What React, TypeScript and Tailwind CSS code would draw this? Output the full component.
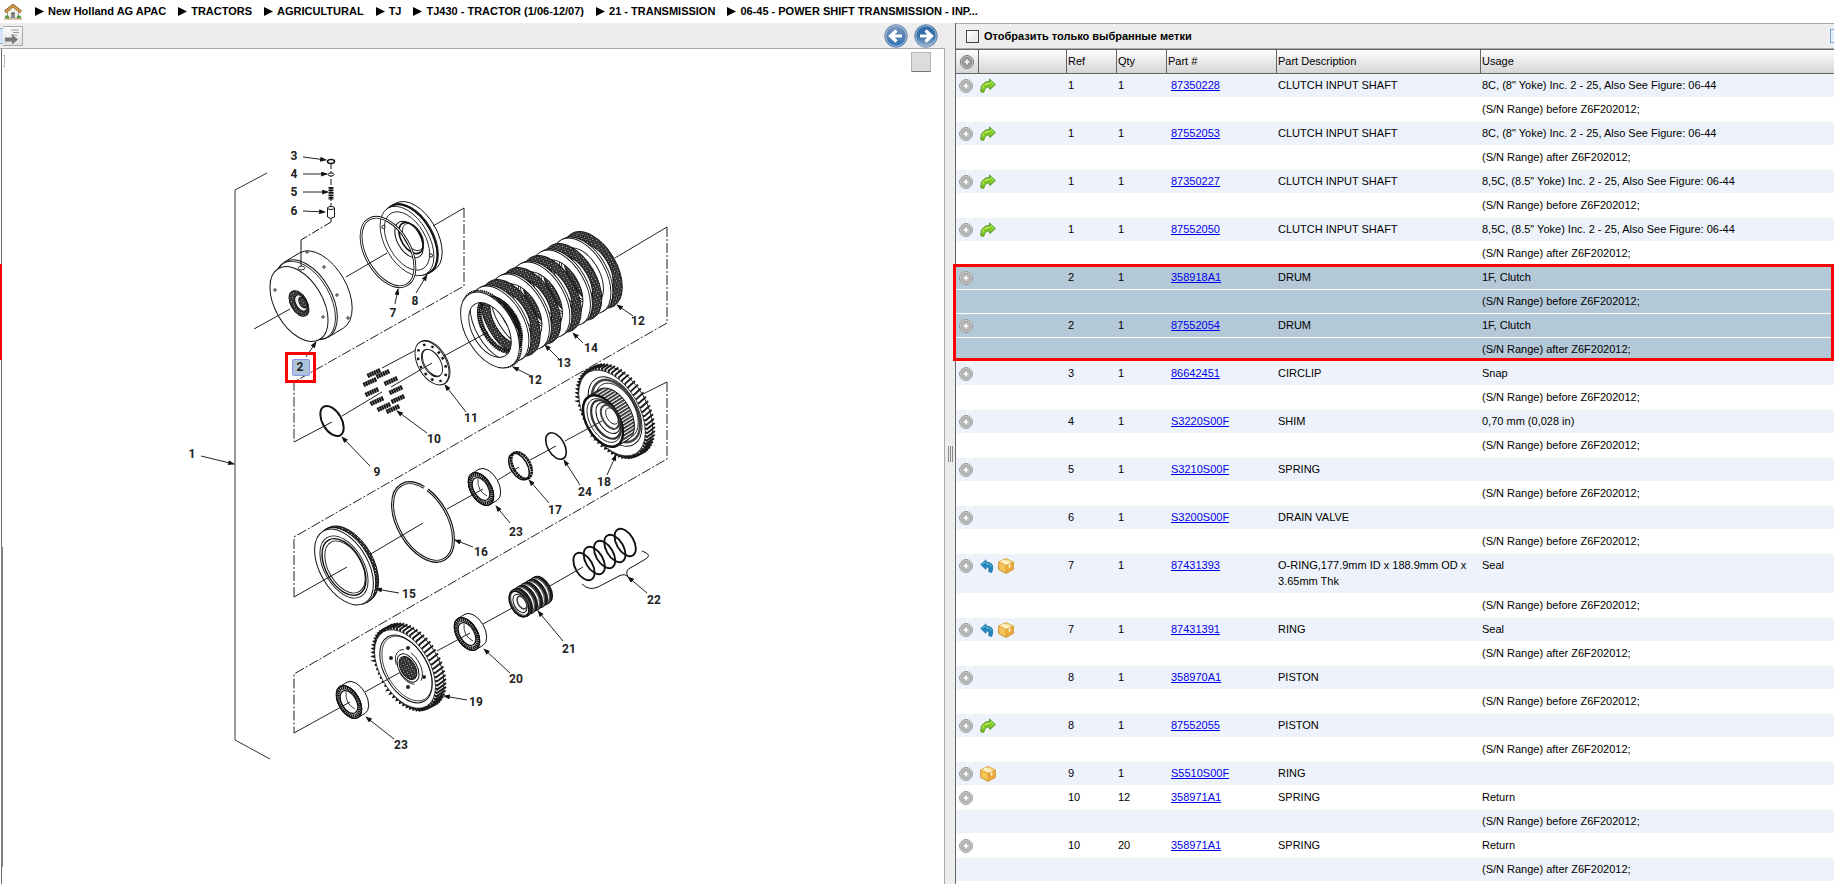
import React from 'react';

type IconName = 'green' | 'blue' | 'box';

interface Part {
  ref: string;
  qty: string;
  number: string;
  description: string;
  usage?: string;
  range?: string;
  icons?: IconName[];
  selected?: boolean;
}

const BEFORE = '(S/N Range) before Z6F202012;';
const AFTER = '(S/N Range) after Z6F202012;';

const parts: Part[] = [
  { ref: '1', qty: '1', number: '87350228', description: 'CLUTCH INPUT SHAFT', usage: '8C, (8" Yoke) Inc. 2 - 25, Also See Figure: 06-44', range: BEFORE, icons: ['green'] },
  { ref: '1', qty: '1', number: '87552053', description: 'CLUTCH INPUT SHAFT', usage: '8C, (8" Yoke) Inc. 2 - 25, Also See Figure: 06-44', range: AFTER, icons: ['green'] },
  { ref: '1', qty: '1', number: '87350227', description: 'CLUTCH INPUT SHAFT', usage: '8,5C, (8.5" Yoke) Inc. 2 - 25, Also See Figure: 06-44', range: BEFORE, icons: ['green'] },
  { ref: '1', qty: '1', number: '87552050', description: 'CLUTCH INPUT SHAFT', usage: '8,5C, (8.5" Yoke) Inc. 2 - 25, Also See Figure: 06-44', range: AFTER, icons: ['green'] },
  { ref: '2', qty: '1', number: '358918A1', description: 'DRUM', usage: '1F, Clutch', range: BEFORE, selected: true },
  { ref: '2', qty: '1', number: '87552054', description: 'DRUM', usage: '1F, Clutch', range: AFTER, selected: true },
  { ref: '3', qty: '1', number: '86642451', description: 'CIRCLIP', usage: 'Snap', range: BEFORE },
  { ref: '4', qty: '1', number: 'S3220S00F', description: 'SHIM', usage: '0,70 mm (0,028 in)', range: BEFORE },
  { ref: '5', qty: '1', number: 'S3210S00F', description: 'SPRING', range: BEFORE },
  { ref: '6', qty: '1', number: 'S3200S00F', description: 'DRAIN VALVE', range: BEFORE },
  { ref: '7', qty: '1', number: '87431393', description: 'O-RING,177.9mm ID x 188.9mm OD x 3.65mm Thk', usage: 'Seal', range: BEFORE, icons: ['blue', 'box'] },
  { ref: '7', qty: '1', number: '87431391', description: 'RING', usage: 'Seal', range: AFTER, icons: ['blue', 'box'] },
  { ref: '8', qty: '1', number: '358970A1', description: 'PISTON', range: BEFORE },
  { ref: '8', qty: '1', number: '87552055', description: 'PISTON', range: AFTER, icons: ['green'] },
  { ref: '9', qty: '1', number: 'S5510S00F', description: 'RING', icons: ['box'] },
  { ref: '10', qty: '12', number: '358971A1', description: 'SPRING', usage: 'Return', range: BEFORE },
  { ref: '10', qty: '20', number: '358971A1', description: 'SPRING', usage: 'Return', range: AFTER },
];

const crumbs = [
  'New Holland AG APAC',
  'TRACTORS',
  'AGRICULTURAL',
  'TJ',
  'TJ430 - TRACTOR (1/06-12/07)',
  '21 - TRANSMISSION',
  '06-45 - POWER SHIFT TRANSMISSION - INP...',
];

/* ---------- icons ---------- */

function HomeIcon() {
  return (
    <svg width="18" height="16" viewBox="0 0 18 16" aria-hidden="true">
      <path d="M3.5 7.5 9 3l5.500 4.500V14h-11z" fill="#f4efe6" stroke="#8d8577" strokeWidth=".8" />
      <path d="M1 8 9 1.300 17 8" fill="none" stroke="#8a5a22" strokeWidth="3" strokeLinejoin="round" />
      <path d="M1.500 7.800 9 1.600l7.500 6.200" fill="none" stroke="#dba352" strokeWidth="1.600" />
      <rect x="7.200" y="9" width="3.600" height="5" fill="#7d7f86" />
      <path d="M7.200 9h3.600" stroke="#444" />
      <rect x="1" y="11.500" width="4" height="3" rx="1.200" fill="#4f9a3a" />
      <rect x="13" y="11.500" width="4" height="3" rx="1.200" fill="#4f9a3a" />
      <path d="M0 15h18" stroke="#b98752" />
      <path d="M7 14.500h4" stroke="#cfc9bd" />
    </svg>
  );
}

function PlusIcon({ dark = false }: { dark?: boolean }) {
  const rim = dark ? '#666' : '#8f8f8f';
  const fill = dark ? '#999' : '#b4b4b4';
  return (
    <svg width="14" height="14" viewBox="0 0 14 14" aria-hidden="true">
      <circle cx="7" cy="7" r="6.400" fill="#dcdcdc" stroke={rim} />
      <circle cx="7" cy="7" r="4.700" fill={fill} stroke={rim} strokeWidth=".6" />
      <path d="M7 4.500v5M4.500 7h5" stroke="#fff" strokeWidth="1.600" />
    </svg>
  );
}

function GreenArrow() {
  return (
    <svg width="16" height="16" viewBox="0 0 16 16" aria-hidden="true">
      <path d="M9.500 1 15.300 6.500 9.800 11.500V9C6.800 8.900 4.600 10 3.800 14.300L1 14C.3 8 3.200 3.600 9.500 3.500z" fill="#82cc22" stroke="#3f8a13" strokeWidth=".9" strokeLinejoin="round" />
      <path d="M10.400 3.100 13.800 6.400M2.300 10.500C3 7 5.500 5.300 9.800 5.200" fill="none" stroke="#c9f07c" />
    </svg>
  );
}

function BlueArrow() {
  return (
    <svg width="14" height="16" viewBox="0 0 14 16" aria-hidden="true">
      <path d="M.8 6.500 6 1.800v2.400c6-.2 8.300 3.500 5.600 10.200L8.600 13.600C9.600 10 8.500 9 6 9.100v2.300z" fill="#2187be" stroke="#1b6a9e" strokeWidth=".8" strokeLinejoin="round" />
      <path d="M2.400 6.200 5.300 3.800M6 5.600c3-.1 4.600 1 5 3" fill="none" stroke="#7cc6e8" />
    </svg>
  );
}

function BoxIcon() {
  return (
    <svg width="16" height="16" viewBox="0 0 16 16" aria-hidden="true">
      <path d="M8 .6 15.300 4v7.500L8 15.400.7 11.500V4z" fill="#f6c55a" stroke="#c98a1c" strokeWidth=".9" strokeLinejoin="round" />
      <path d="M8 .9 15 4.100 8 7.600 1 4.100z" fill="#fbe09a" />
      <path d="M8 7.600 15 4.100v7.300L8 15z" fill="#eaa93a" />
      <path d="M4 2.600 11.500 6v3.400" fill="none" stroke="#fff7dc" strokeWidth="1.700" />
      <path d="M.9 4.100 8 7.600l7-3.500M8 7.600v7.400" fill="none" stroke="#d39a2d" strokeWidth=".7" />
    </svg>
  );
}

function NavArrow({ flip = false }: { flip?: boolean }) {
  return (
    <svg width="24" height="24" viewBox="0 0 24 24" aria-hidden="true">
      <defs>
        <linearGradient id={flip ? 'nav-next' : 'nav-prev'} x1="0" y1="0" x2="0" y2="1">
          <stop offset="0" stopColor={flip ? '#2f6da8' : '#7f9cc0'} />
          <stop offset=".5" stopColor={flip ? '#356fa9' : '#5580b3'} />
          <stop offset="1" stopColor={flip ? '#9fb6d0' : '#2c75b8'} />
        </linearGradient>
      </defs>
      <circle cx="12" cy="12" r="11.300" fill={flip ? 'url(#nav-next)' : 'url(#nav-prev)'} stroke="#6d8cb0" />
      <circle cx="12" cy="12" r="10.200" fill="none" stroke="#b7cbe0" strokeWidth=".8" />
      <path
        d={flip ? 'M6 12h9M11.500 6.500l6 5.500-6 5.500' : 'M18 12H9M12.500 6.500l-6 5.500 6 5.500'}
        fill="none"
        stroke="#fff"
        strokeWidth="3.200"
      />
    </svg>
  );
}

function PageArrowIcon() {
  return (
    <svg width="17" height="18" viewBox="0 0 17 18" aria-hidden="true">
      <path d="M7 3h8M9 5.500h6M7 8h6" stroke="#9a9a9a" />
      <path d="M1 10.500h7V7.500l6 5-6 5v-3H1z" fill="#777" />
    </svg>
  );
}

function RowIcon({ name }: { name: IconName }) {
  if (name === 'green') return <GreenArrow />;
  if (name === 'blue') return <BlueArrow />;
  return <BoxIcon />;
}

/* ---------- exploded view ---------- */

// every disc is seen along the same axis, so all ellipses share one ratio and tilt
const RATIO = 0.58;

interface DiscProps {
  x: number;
  y: number;
  r: number;
  fill?: string;
  stroke?: string;
  w?: number;
  dash?: string;
  pathLength?: number;
}

function Disc({ x, y, r, fill = 'none', stroke = '#111', w = 1, dash, pathLength }: DiscProps) {
  return (
    <ellipse
      rx={r * RATIO}
      ry={r}
      transform={`translate(${x} ${y}) rotate(-30)`}
      fill={fill}
      stroke={stroke}
      strokeWidth={w}
      strokeDasharray={dash}
      pathLength={pathLength}
    />
  );
}

function Cylinder({ x, y, r, depth, side = '#fff' }: { x: number; y: number; r: number; depth: number; side?: string }) {
  const dx = depth;
  const dy = -depth * 0.6;
  const ox = r * 0.5;
  const oy = r * 0.866;
  return (
    <g stroke="#111" strokeWidth="1">
      <path
        d={`M${x - ox} ${y - oy}l${dx} ${dy}A${r * RATIO} ${r} -30 0 1 ${x + ox + dx} ${y + oy + dy}L${x + ox} ${y + oy}z`}
        fill={side}
      />
      <Disc x={x} y={y} r={r} fill="#fff" />
    </g>
  );
}

function Annulus({ x, y, r, inner, fill }: { x: number; y: number; r: number; inner: number; fill: string }) {
  const loop = (a: number) => `M0 ${-a}A${a * RATIO} ${a} 0 1 1 0 ${a}A${a * RATIO} ${a} 0 1 1 0 ${-a}z`;
  return (
    <path
      d={loop(r) + loop(inner)}
      transform={`translate(${x} ${y}) rotate(-30)`}
      fillRule="evenodd"
      fill={fill}
      stroke="#111"
      strokeWidth=".9"
    />
  );
}

// helical gear rim: one slanted stroke per tooth from the front face to the back face
function GearRim({ x, y, r, depth, teeth }: { x: number; y: number; r: number; depth: number; teeth: number }) {
  const point = (angle: number, cx: number, cy: number, a: number) => {
    const u = Math.cos(angle) * a * RATIO;
    const v = Math.sin(angle) * a;
    return `${(cx + u * 0.866 + v * 0.5).toFixed(1)} ${(cy - u * 0.5 + v * 0.866).toFixed(1)}`;
  };
  const strokes = Array.from({ length: teeth }, (_, i) => {
    const angle = (i / teeth) * Math.PI * 2;
    return `M${point(angle, x, y, r - 3)}L${point(angle, x, y, r)}L${point(angle - 0.05, x + depth, y - depth * 0.5, r)}`;
  });
  return (
    <g>
      <Disc x={x + depth - 1} y={y - depth * 0.5} r={r - 2} fill="#fff" w={0.8} />
      <path d={strokes.join('')} fill="none" stroke="#1a1a1a" strokeWidth="1.900" />
      <Disc x={x} y={y} r={r - 2.500} fill="#fff" w={0.7} />
    </g>
  );
}

function Bearing({ x, y }: { x: number; y: number }) {
  return (
    <g>
      <Cylinder x={x} y={y} r={18} depth={7} />
      <Disc x={x} y={y} r={15.500} w={3.600} dash="1.500 .5" />
      <Disc x={x} y={y} r={17.800} w={1.200} />
      <Disc x={x} y={y} r={12.500} w={1.200} fill="#fff" />
      <path d={`M${x - 3} ${y - 10}q-1 12 9 17`} fill="none" stroke="#111" strokeWidth=".8" />
    </g>
  );
}

const callouts: [string, number, number][] = [
  ['1', 192, 454], ['2', 300, 367], ['3', 294, 156], ['4', 294, 174], ['5', 294, 192], ['6', 294, 211],
  ['7', 393, 313], ['8', 415, 301], ['9', 377, 472], ['10', 434, 439], ['11', 471, 418], ['12', 638, 321],
  ['12', 535, 380], ['13', 564, 363], ['14', 591, 348], ['15', 409, 594], ['16', 481, 552], ['17', 555, 510],
  ['18', 604, 482], ['19', 476, 702], ['20', 516, 679], ['21', 569, 649], ['22', 654, 600], ['23', 516, 532],
  ['23', 401, 745], ['24', 585, 492],
];

const leaders = [
  'M303 157 326 160', 'M303 174 327 174', 'M303 192 328 192', 'M303 211 325 212', 'M416 293 427 275',
  'M395 304 398 289', 'M306 357 316 342', 'M466 412 445 385', 'M427 433 397 411', 'M370 466 342 437',
  'M201 456 234 464', 'M633 316 617 305', 'M583 343 573 333', 'M559 359 545 345', 'M531 376 513 367',
  'M607 475 616 455', 'M580 485 564 460', 'M549 503 529 480', 'M510 523 496 506', 'M473 547 455 540',
  'M399 593 376 589', 'M510 673 484 649', 'M467 700 444 696', 'M394 739 366 717', 'M563 641 538 611',
  'M647 593 628 577',
];

const axes = [
  'M254 329 290 309', 'M346 277 387 253', 'M433 226 464 208', 'M342 416 382 392', 'M391 387 432 363',
  'M444 356 488 332', 'M382 368 416 350', 'M615 258 667 227', 'M294 442 332 422', 'M369 555 423 523',
  'M447 509 483 489', 'M498 480 519 467', 'M530 460 556 446', 'M565 441 602 421', 'M643 394 667 382',
  'M294 597 347 567', 'M365 692 399 673', 'M437 651 470 633', 'M483 624 514 607', 'M548 587 583 567',
  'M294 733 350 702',
];

const springs: [number, number][] = [
  [374, 373], [383, 374], [370, 382], [391, 381], [372, 392], [396, 390], [377, 401], [398, 399], [384, 407], [393, 409],
];

const drumHoles: [number, number][] = [[307, 252], [324, 267], [337, 295], [348, 318], [275, 290], [323, 317]];
const gearHoles: [number, number][] = [[408, 648], [391, 658], [424, 677], [408, 687]];
const plates = [5, 4, 3, 2, 1];

function Figure() {
  return (
    <svg width="700" height="720" viewBox="3 49 700 720" role="img" aria-label="Power shift transmission">
      <defs>
        <pattern id="mesh" width="3" height="3" patternUnits="userSpaceOnUse">
          <rect width="3" height="3" fill="#222" />
          <rect width="1" height="1" fill="#ccc" />
          <rect x="1.500" y="1.500" width="1" height="1" fill="#888" />
        </pattern>
        <pattern id="teeth" width="3" height="3" patternUnits="userSpaceOnUse" patternTransform="rotate(-32)">
          <rect width="3" height="3" fill="#fff" />
          <rect width="3" height="1.700" fill="#222" />
        </pattern>
        <marker id="tip" viewBox="0 0 8 6" refX="7" refY="3" markerWidth="8" markerHeight="5" markerUnits="userSpaceOnUse" orient="auto">
          <path d="M0 0 8 3 0 6z" fill="#111" />
        </marker>
      </defs>

      {/* bracket of the whole assembly */}
      <path d="M267 173 235 190V740L270 759" fill="none" stroke="#333" />

      {/* assembly break lines */}
      <g fill="none" stroke="#222" strokeDasharray="10 2 2 2">
        <path d="M464 208V286L294 382V442" />
        <path d="M667 227V323L294 537V597" />
        <path d="M667 382V459L294 674V733" />
      </g>

      {/* 3-6 drain valve */}
      <g stroke="#111" fill="none">
        <path d="M331 163V222" strokeDasharray="6 2" />
        <path d="M331 222 301 240" strokeDasharray="8 2 2 2" />
        <ellipse cx="331" cy="161.500" rx="3.500" ry="2" fill="#fff" strokeWidth="1.500" />
        <ellipse cx="331" cy="174.500" rx="3" ry="1.500" fill="#fff" />
        <path d="M331 187v13" strokeWidth="5" strokeDasharray="1.800 .7" />
        <path d="M327.500 208v9q3.500 3 7 0v-9z" fill="#fff" />
        <ellipse cx="331" cy="208" rx="3.500" ry="1.500" fill="#fff" />
      </g>

      {/* 2 drum */}
      <Cylinder x={306.500} y={299.500} r={43.500} depth={15} />
      <Disc x={305} y={300.500} r={43} w={0.800} />
      <Disc x={299} y={304} r={41} fill="#fff" />
      <path d="M301 240v27" stroke="#111" />
      <ellipse cx="301.500" cy="268" rx="3.500" ry="1.800" fill="#fff" stroke="#111" strokeWidth=".8" />
      <Disc x={299} y={303.500} r={14} fill="url(#mesh)" />
      <Disc x={301} y={303} r={9} fill="#eee" />
      <Disc x={303} y={302.500} r={6} fill="url(#mesh)" />
      {drumHoles.map(([x, y]) => (
        <circle key={`${x}-${y}`} cx={x} cy={y} r="1.200" fill="#fff" stroke="#111" strokeWidth=".9" />
      ))}

      {/* 8 piston with 7 o-ring in front */}
      <Cylinder x={411} y={239} r={38.500} depth={4} />
      <Disc x={410} y={239.500} r={38.500} w={1.800} />
      <Disc x={407} y={241} r={38} fill="#fff" w={0.800} />
      <Disc x={407} y={241} r={32} w={0.800} />
      <Disc x={409} y={239.500} r={20} />
      <Disc x={411} y={238} r={17} w={1.600} />
      <Disc x={413} y={237} r={15} w={0.800} />
      <circle cx="383.500" cy="227" r="1.600" fill="#fff" stroke="#111" />
      <circle cx="431" cy="255.500" r="1.600" fill="#fff" stroke="#111" />
      <Disc x={388} y={252} r={38} w={2.800} />
      <Disc x={388} y={252} r={38} stroke="#fff" w={1} />

      {/* 12-14 clutch pack, drawn back to front */}
      {plates.map((n) => (
        <g key={n}>
          <Annulus x={490 + n * 20.500} y={330 - n * 12} r={42} inner={29} fill="url(#mesh)" />
          <Annulus x={481 + n * 20.500} y={335 - n * 12} r={41.500} inner={31} fill="#fff" />
          <Annulus x={479 + n * 20.500} y={336 - n * 12} r={41.500} inner={31} fill="#fff" />
        </g>
      ))}
      <Disc x={500} y={325} r={29} w={5} dash="1.500 .6" />
      <Disc x={491.500} y={329} r={42} w={2} dash="1.500 .6" />
      <Annulus x={490} y={330} r={41.500} inner={30} fill="#fff" />

      {/* 11 retainer */}
      <Annulus x={433} y={362.500} r={24} inner={15} fill="#fff" />
      <Annulus x={432} y={363} r={24} inner={15} fill="#fff" />
      <Disc x={432} y={363} r={20} w={2.500} dash="2.500 6" />

      {/* 10 return springs */}
      {springs.map(([x, y]) => (
        <path key={`${x}-${y}`} d={`M${x - 6.500} ${y + 3}l13-6`} stroke="#111" strokeWidth="4.500" strokeDasharray="2 .4" />
      ))}

      {/* 9 ring */}
      <Disc x={332} y={421} r={16.500} w={2} />

      {/* 18 gear with hub */}
      <GearRim x={612} y={413} r={49.500} depth={8} teeth={64} />
      <Disc x={615} y={411.500} r={38} w={1} />
      <Disc x={616} y={411} r={34} w={2.500} stroke="#444" />
      <Disc x={617} y={410.500} r={30} w={0.800} />
      <Cylinder x={603} y={421} r={29} depth={11} side="url(#teeth)" />
      <Disc x={603} y={421} r={28} w={2.200} />
      <Disc x={604} y={420.500} r={24} w={0.800} />
      <Disc x={606} y={419.500} r={21} w={2.200} stroke="#333" />
      <Disc x={608} y={418} r={17} w={1} />
      <Disc x={610} y={417} r={13} w={2} stroke="#444" />
      <Disc x={612} y={416} r={9} w={0.800} />

      {/* 24, 17 rings */}
      <Disc x={556} y={446} r={14.500} w={1.600} />
      <Disc x={521.500} y={465.500} r={14.500} w={2.600} dash="2.400 .4" />
      <Disc x={519} y={466.500} r={14.500} w={1.600} />

      <Bearing x={481} y={489} />

      {/* 16 snap ring */}
      <Disc x={423} y={522} r={43} w={3} pathLength={100} dash="86 2 12 0" />
      <Disc x={423} y={522} r={43} w={0.800} stroke="#fff" />

      {/* 15 plate */}
      <Cylinder x={346} y={566} r={42} depth={3} side="url(#mesh)" />
      <Disc x={344} y={567} r={41.500} fill="#fff" />
      <Disc x={344} y={567} r={34} w={0.900} />
      <Disc x={344} y={567} r={31} w={1.400} />
      <Disc x={345} y={567} r={28.500} w={0.900} />

      {/* 19 gear */}
      <GearRim x={405} y={669} r={45.500} depth={9} teeth={60} />
      <Disc x={406} y={669} r={37} />
      <Disc x={407} y={668.500} r={35.500} w={0.700} />
      <Disc x={409} y={667} r={19} w={0.800} dash="20 8" />
      <Disc x={408} y={668} r={15.500} />
      <Disc x={408} y={668} r={12.500} fill="url(#mesh)" />
      {gearHoles.map(([x, y]) => (
        <circle key={`${x}-${y}`} cx={x} cy={y} r="2" fill="#222" />
      ))}

      <Bearing x={467} y={634} />
      <Bearing x={349} y={702} />

      {/* 21 sleeve */}
      {[4, 3, 2, 1, 0].map((n) => (
        <g key={n}>
          <Cylinder x={520 + n * 5} y={603 - n * 3} r={15} depth={2} side="#222" />
          <Disc x={520 + n * 5} y={603 - n * 3} r={13.500} w={1.400} stroke="#555" />
        </g>
      ))}
      <Disc x={519} y={604} r={14} w={1.600} />
      <Disc x={520} y={603.500} r={10} w={1} />
      <Disc x={522} y={602.500} r={7} w={1.600} stroke="#444" />

      {/* 22 sealing rings */}
      {[0, 1, 2, 3, 4].map((n) => (
        <Disc key={n} x={584 + n * 10.300} y={566.500 - n * 6} r={15} w={1.900} />
      ))}
      <path
        d="M582 584q7 7 16 3l21-11q6-3 9 1-4-7 4-10l12-7q10-5-2-9"
        fill="none"
        stroke="#111"
      />

      <g stroke="#222" fill="none">
        {axes.map((d) => <path key={d} d={d} />)}
      </g>
      <g stroke="#222" fill="none">
        {leaders.map((d) => <path key={d} d={d} markerEnd="url(#tip)" />)}
      </g>

      {/* selected callout */}
      <rect x="286.500" y="353.500" width="28" height="28" fill="none" stroke="#f00" strokeWidth="3" />
      <rect x="292.500" y="359.500" width="17" height="16" rx="1" fill="#abc4da" stroke="#9090ea" />

      <g className="font-['Liberation_Sans_Narrow',Roboto,sans-serif] text-[12px] font-bold" fill="#222" textAnchor="middle">
        {callouts.map(([label, x, y]) => (
          <text key={`${label}-${x}`} x={x} y={y + 4}>{label}</text>
        ))}
      </g>
    </svg>
  );
}

/* ---------- parts list ---------- */

const cell = 'pt-[3px] pb-1 pl-px align-top border-b border-white';

function PartRows({ items }: { items: Part[] }) {
  let index = 0;
  const shade = (selected?: boolean) => {
    const striped = index % 2 === 0;
    index += 1;
    if (selected) return 'bg-[#b4c9d8]';
    return striped ? 'bg-[#eef3fb]' : 'bg-white';
  };

  return (
    <>
      {items.map((part, i) => (
        <React.Fragment key={i}>
          <tr className={shade(part.selected)}>
            <td className={cell}>
              <button type="button" aria-label={`Add ${part.number}`} className="flex h-4 items-center pl-0.5 pt-0.5">
                <PlusIcon />
              </button>
            </td>
            <td className={cell}>
              <div className="flex h-4 items-center gap-1 pt-0.5">
                {part.icons?.map((name) => <RowIcon key={name} name={name} />)}
              </div>
            </td>
            <td className={cell}>{part.ref}</td>
            <td className={cell}>{part.qty}</td>
            <td className={cell}>
              <a href="#" className="ml-[3px] text-[#0000ee] underline">{part.number}</a>
            </td>
            <td className={cell}>{part.description}</td>
            <td className={cell}>{part.usage}</td>
          </tr>
          {part.range && (
            <tr className={shade(part.selected)}>
              <td colSpan={6} className={cell} />
              <td className={cell}>{part.range}</td>
            </tr>
          )}
        </React.Fragment>
      ))}
    </>
  );
}

function PartsTable() {
  const first = parts.findIndex((p) => p.selected);
  const last = first + parts.filter((p) => p.selected).length;
  const head = 'h-[25px] border-y border-[#666] pb-0.5 pl-px text-left font-normal';

  return (
    <table className="w-full table-fixed border-separate border-spacing-0 leading-4">
      <colgroup>
        <col className="w-[23px]" />
        <col className="w-[88px]" />
        <col className="w-[50px]" />
        <col className="w-[50px]" />
        <col className="w-[110px]" />
        <col className="w-[204px]" />
        <col />
      </colgroup>
      <thead>
        <tr className="bg-linear-to-b from-white to-[#d4d4d4]">
          <th className={`${head} border-r`}>
            <button type="button" aria-label="Add all" className="flex items-center pt-0.5 pl-[3px]">
              <PlusIcon dark />
            </button>
          </th>
          <th className={`${head} border-r`} aria-label="Status" />
          <th className={`${head} border-r`}>Ref</th>
          <th className={`${head} border-r`}>Qty</th>
          <th className={`${head} border-r`}>Part #</th>
          <th className={`${head} border-r`}>Part Description</th>
          <th className={head}>Usage</th>
        </tr>
      </thead>
      <tbody>
        <PartRows items={parts.slice(0, first)} />
      </tbody>
      <tbody className="relative after:pointer-events-none after:absolute after:-top-0.5 after:right-0 after:bottom-px after:-left-[3px] after:border-3 after:border-[#ff0000] after:content-['']">
        <PartRows items={parts.slice(first, last)} />
      </tbody>
      <tbody>
        <PartRows items={parts.slice(last)} />
      </tbody>
    </table>
  );
}

export default function App() {
  return (
    <div className="flex h-screen flex-col overflow-hidden bg-white font-['Liberation_Sans',Arial,sans-serif] text-[11px] text-black">
      {/* Breadcrumbs */}
      <nav className="flex h-[23px] shrink-0 items-center gap-[13px] pl-1 font-bold whitespace-nowrap">
        <a href="#" aria-label="Home"><HomeIcon /></a>
        <ol className="flex items-center gap-3">
          {crumbs.map((crumb) => (
            <li key={crumb} className="flex items-center gap-1">
              <svg width="9" height="9" viewBox="0 0 9 9" aria-hidden="true"><path d="M0 0 9 4.500 0 9z" /></svg>
              <a href="#">{crumb}</a>
            </li>
          ))}
        </ol>
      </nav>

      <div className="grid min-h-0 flex-1 grid-cols-[945fr_10px_879fr]">
        {/* Figure pane */}
        <section className="flex min-w-0 flex-col">
          <div className="flex h-[26px] shrink-0 items-center border-b border-[#aaa] bg-[#ededed]">
            <div className="h-4 w-[3px] border-y border-[#8fb0d8] bg-[#d4e3f5]" />
            <button type="button" aria-label="Show page" className="flex size-5 items-center justify-center border border-l-0 border-[#a9a9a9] bg-linear-to-b from-[#fafafa] to-[#e2e2e2]">
              <PageArrowIcon />
            </button>
            <div className="ml-auto flex gap-1.5 pr-[7px]">
              <button type="button" aria-label="Previous figure"><NavArrow /></button>
              <button type="button" aria-label="Next figure"><NavArrow flip /></button>
            </div>
          </div>
          <div className="flex min-h-0 flex-1 border-r border-[#aaa]">
            {/* sliver of the collapsed pane */}
            <div className="flex w-[3px] shrink-0 flex-col">
              <div className="h-[215px] w-0.5 border-r border-[#666]" />
              <div className="h-24 w-0.5 bg-[#f00]" />
              <div className="h-[187px] w-0.5 border-r border-[#666]" />
              <div className="h-80 border-r-2 border-[#7d8286]" />
              <div className="w-0.5 flex-1 border-r border-[#666]" />
            </div>
            <div className="relative min-w-0 flex-1 overflow-hidden">
              <Figure />
              <div className="absolute top-1.5 left-0 h-3 w-0.5 border border-l-0 border-[#bbb]" />
              <button type="button" aria-label="Overview" className="absolute top-[3px] right-[13px] size-5 border border-[#b5b5b5] border-b-[#777] bg-[#dcdcdc]" />
            </div>
          </div>
        </section>

        {/* Splitter */}
        <div className="flex items-center justify-center gap-px bg-[#ededed]">
          <div className="h-4 w-px bg-[#888]" />
          <div className="h-4 w-px bg-[#888]" />
          <div className="h-4 w-px bg-[#888]" />
        </div>

        {/* Parts pane */}
        <section className="min-w-0 border-l border-[#666]">
          <div className="flex h-[26px] items-center justify-between border-y border-[#aaa] bg-[#ededed] pl-2.5">
            <label className="flex items-center gap-[5px] font-bold">
              <input type="checkbox" className="size-[13px] appearance-none border border-[#444] bg-linear-to-br from-white to-[#e4e4e4]" />
              Отобразить только выбранные метки
            </label>
            <div className="h-3.5 w-1 border-y border-l border-[#7ba4d4] bg-[#e3edf8]" />
          </div>
          <PartsTable />
        </section>
      </div>
    </div>
  );
}
